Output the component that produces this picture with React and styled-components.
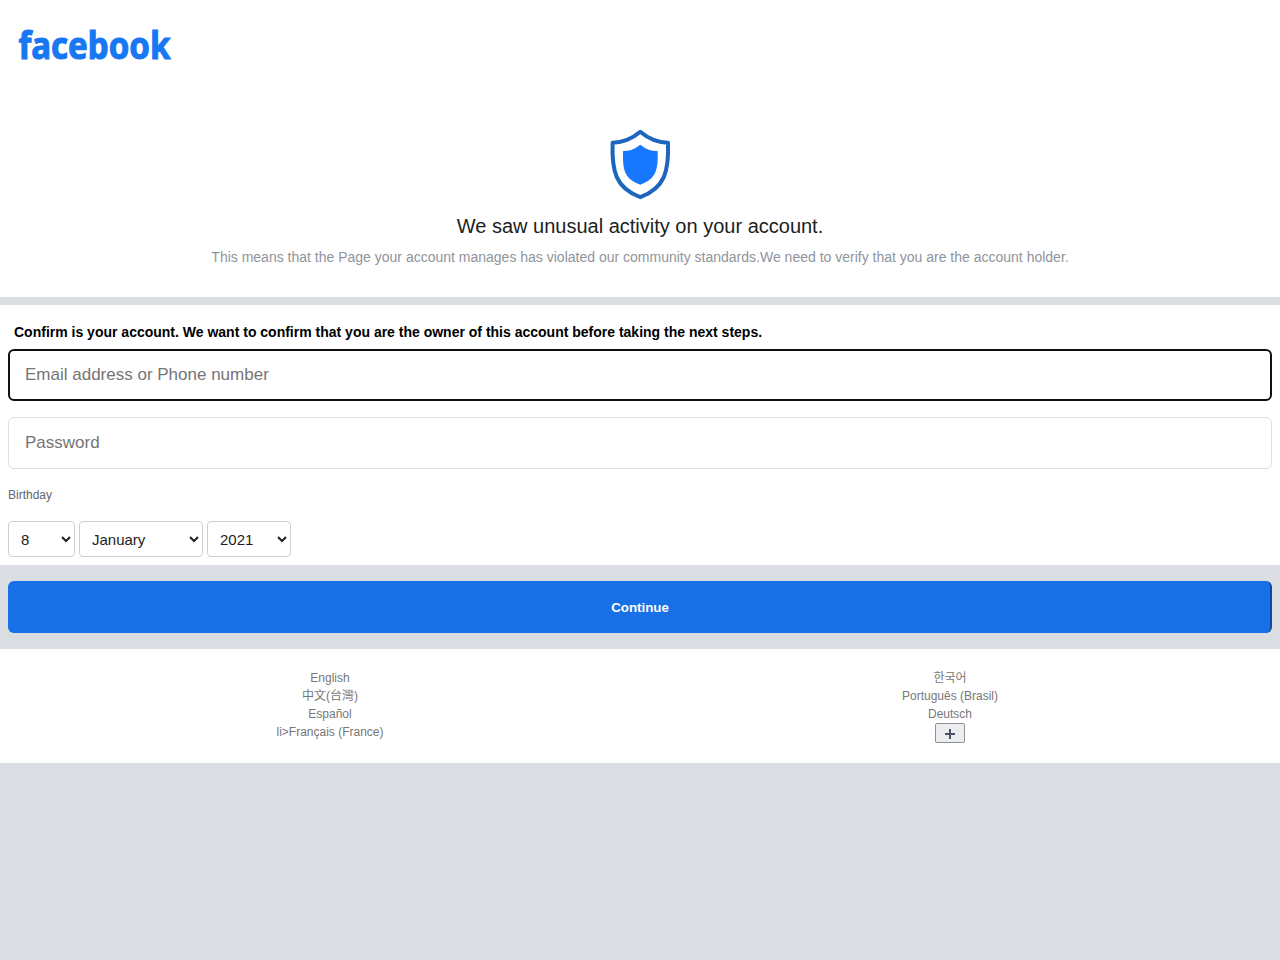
import React from "react";
import styled, { createGlobalStyle } from "styled-components";

// Static visual mock: nothing on this page accepts, stores or sends data.
const GlobalStyle = createGlobalStyle`
  * { box-sizing: border-box; }
  body {
    margin: 0;
    background: #dadde1;
    color: #1c1e21;
    font-family: "Liberation Sans", "Noto Sans CJK TC", "Noto Sans CJK KR", sans-serif;
  }
`;

const Page = styled.div`
  display: flex;
  flex-direction: column;
`;

const Header = styled.header`
  display: flex;
  flex-direction: column;
  height: 297px;
  background: #fff;
`;

const Wordmark = styled.svg`
  display: block;
  width: 240px;
  height: 90px;
  flex: none;
  overflow: visible;
  text {
    font-family: "Noto Sans", sans-serif;
    font-weight: 700;
    font-size: 37px;
    fill: #1877f2;
    stroke: #1877f2;
    stroke-width: 1.1px;
  }
`;

const Notice = styled.section`
  display: flex;
  flex-direction: column;
  align-items: center;
  padding-top: 38px;
`;

const Shield = styled.svg`
  display: block;
  width: 64px;
  height: 73px;
`;

const Title = styled.h1`
  margin: 13px 0 0;
  font-size: 20px;
  line-height: 24px;
  font-weight: 400;
`;

const Subtitle = styled.p`
  margin: 9px 0 0;
  font-size: 14px;
  line-height: 20px;
  color: #90949c;
`;

const Details = styled.section`
  display: flex;
  flex-direction: column;
  height: 260px;
  margin-top: 8px;
  padding: 19px 8px 0;
  background: #fff;
`;

const Prompt = styled.p`
  margin: 0 0 9px;
  padding-left: 6px;
  font-size: 14px;
  line-height: 16px;
  font-weight: 700;
  color: #000;
`;

const Field = styled.div`
  display: flex;
  align-items: center;
  height: 52px;
  margin-bottom: 16px;
  padding: 0 ${(p) => (p.$active ? 15 : 16)}px;
  border: ${(p) => (p.$active ? "2px solid #101010" : "1px solid #dddfe2")};
  border-radius: 6px;
  font-size: 17px;
  color: #757575;
`;

const Caption = styled.div`
  margin-top: 2px;
  font-size: 12px;
  line-height: 16px;
  color: #606770;
`;

const DateRow = styled.div`
  display: flex;
  gap: 4px;
  margin-top: 18px;
`;

const Picker = styled.div`
  display: flex;
  align-items: center;
  justify-content: space-between;
  width: ${(p) => p.$width}px;
  height: 36px;
  padding: 1px 3px 0 12px;
  border: 1px solid #ccd0d5;
  border-radius: 4px;
  font-size: 15px;
  svg {
    width: 10px;
    height: 8px;
    margin-top: -2px;
  }
`;

const Action = styled.div`
  display: flex;
  align-items: center;
  justify-content: center;
  height: 52px;
  margin: 16px 8px;
  border-right: 2px solid #124a9b;
  border-left: 2px solid #1770e6;
  border-radius: 6px;
  background: #1770e6;
  color: #fff;
  font-size: 13.333px;
  font-weight: 700;
`;

const Footer = styled.footer`
  display: flex;
  height: 114px;
  padding: 20px 20px 0;
  background: #fff;
`;

const Languages = styled.div`
  display: flex;
  flex: 1;
  flex-direction: column;
  align-items: center;
  font-size: 12px;
  line-height: 18px;
  color: #777;
`;

const Language = styled.span`
  height: 18px;
`;

const More = styled.div`
  display: flex;
  align-items: center;
  justify-content: center;
  width: 30px;
  height: 20px;
  padding-top: 2px;
  border: 1px solid #8f9096;
  border-radius: 2px;
  background: #ebedf0;
  svg {
    width: 10px;
    height: 10px;
  }
`;

const DatePart = ({ width, children }) => (
  <Picker $width={width}>
    {children}
    <svg viewBox="0 0 10 8">
      <path d="M1 2 L5 6 L9 2" fill="none" stroke="#1c1e21" strokeWidth="2" />
    </svg>
  </Picker>
);

export default function App() {
  return (
    <Page>
      <GlobalStyle />
      <Header>
        <Wordmark viewBox="0 0 240 90">
          <text x="18.5" y="59" textLength="152" lengthAdjust="spacingAndGlyphs">
            facebook
          </text>
        </Wordmark>
        <Notice>
          <Shield viewBox="608 128 64 73">
            <path
              d="M640.3 131.8 Q628 142.3 612.6 142.8 C611.6 171 615.5 188 640.3 197.2 C665 188 669 171 668 142.8 Q652.5 142.3 640.3 131.8 Z"
              fill="#fff"
              stroke="#1c66c0"
              strokeWidth="4"
              strokeLinejoin="round"
            />
            <path
              d="M640.3 144.7 Q632 151.3 623.1 151.1 C622.5 169.5 624 179 640.3 184.8 C656.5 179 658.2 169.5 657.6 151.1 Q648.5 151.3 640.3 144.7 Z"
              fill="#1877ff"
            />
          </Shield>
          <Title>We saw unusual activity on your account.</Title>
          <Subtitle>
            This means that the Page your account manages has violated our
            community standards.We need to verify that you are the account
            holder.
          </Subtitle>
        </Notice>
      </Header>
      <Details>
        <Prompt>
          Confirm is your account. We want to confirm that you are the owner of
          this account before taking the next steps.
        </Prompt>
        <Field $active>Email address or Phone number</Field>
        <Field>Password</Field>
        <Caption>Birthday</Caption>
        <DateRow>
          <DatePart width={67}>8</DatePart>
          <DatePart width={124}>January</DatePart>
          <DatePart width={84}>2021</DatePart>
        </DateRow>
      </Details>
      <Action>Continue</Action>
      <Footer>
        <Languages>
          <Language>English</Language>
          <Language>中文(台灣)</Language>
          <Language>Español</Language>
          <Language>li&gt;Français (France)</Language>
        </Languages>
        <Languages>
          <Language lang="ko">한국어</Language>
          <Language>Português (Brasil)</Language>
          <Language>Deutsch</Language>
          <More>
            <svg viewBox="0 0 10 10">
              <path d="M5 0V10M0 5H10" stroke="#4b5267" strokeWidth="2" />
            </svg>
          </More>
        </Languages>
      </Footer>
    </Page>
  );
}
